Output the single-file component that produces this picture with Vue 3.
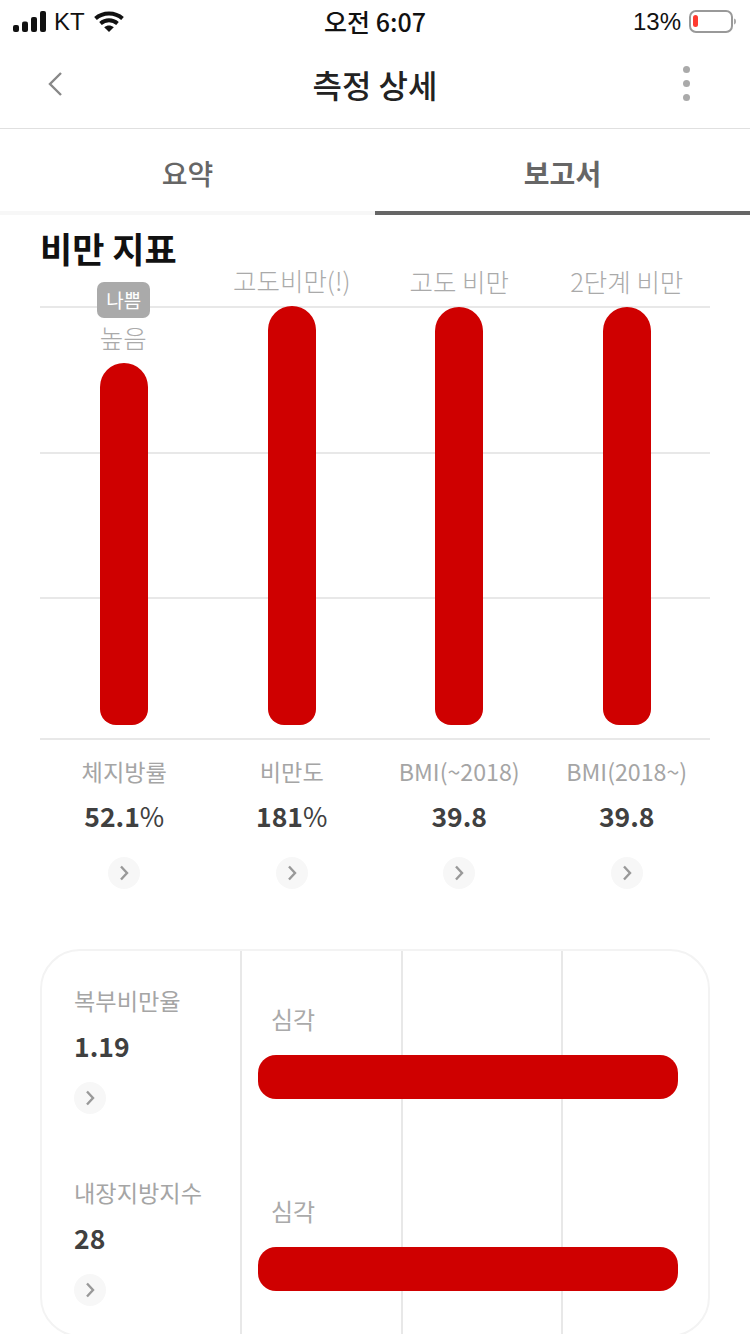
<template>
  <div class="page">
    <!-- status bar -->
    <div class="status-bar">
      <div class="status-left">
        <svg class="signal" width="34" height="22" viewBox="0 0 34 22">
          <rect x="0" y="14" width="6" height="7" rx="2" fill="#111" />
          <rect x="9" y="10.5" width="6" height="10.5" rx="2" fill="#111" />
          <rect x="18" y="6" width="6" height="15" rx="2" fill="#111" />
          <rect x="27" y="0" width="6" height="21" rx="2" fill="#111" />
        </svg>
        <span class="carrier">KT</span>
        <svg class="wifi" width="30" height="22" viewBox="0 0 30 22">
          <path d="M1.5 7.500C9 .8 21 .8 28.500 7.500" fill="none" stroke="#111" stroke-width="4" />
          <path d="M6.500 12.500c5-4.200 12-4.200 17 0" fill="none" stroke="#111" stroke-width="4" />
          <path d="M10.200 16.200c3-2.400 6.600-2.400 9.600 0L15 21z" fill="#111" />
        </svg>
      </div>
      <div class="status-time">오전 6:07</div>
      <div class="status-right">
        <span class="percent">13%</span>
        <svg width="48" height="24" viewBox="0 0 48 24">
          <rect x="1" y="1" width="42" height="21" rx="6" fill="#fff" stroke="#999" stroke-width="2" />
          <rect x="4" y="5" width="5" height="12" rx="2.500" fill="#ff3b30" />
          <path d="M45 8.500c1.600.4 2 1.600 2 3s-.4 2.600-2 3z" fill="#aaa" />
        </svg>
      </div>
    </div>

    <!-- nav -->
    <div class="nav">
      <svg class="nav-back" width="16" height="26" viewBox="0 0 16 26">
        <path d="M14 2 3 13l11 11" fill="none" stroke="#888" stroke-width="2.400" />
      </svg>
      <div class="nav-title">측정 상세</div>
      <div class="nav-more">
        <i /><i /><i />
      </div>
    </div>

    <!-- tabs -->
    <div class="tabs">
      <div class="tab">요약</div>
      <div class="tab active">보고서</div>
    </div>

    <div class="section-title">비만 지표</div>

    <!-- bar chart -->
    <div class="chart">
      <div class="chart-lines">
        <div class="chart-line" v-for="h in lineGaps" :key="h" :style="{ height: h + 'px' }" />
      </div>
      <div v-for="item in columns" :key="item.name" class="chart-col">
        <span v-if="item.badge" class="badge">{{ item.badge }}</span>
        <span class="col-level" :class="{ 'with-badge': item.badge }">{{ item.level }}</span>
        <div class="col-bar" :style="{ height: item.height + 'px' }" />
      </div>
    </div>

    <div class="metrics">
      <div v-for="item in columns" :key="item.name" class="metric">
        <div class="metric-name">{{ item.name }}</div>
        <div class="metric-value">{{ item.value }}<span class="unit">{{ item.unit }}</span></div>
        <div class="more-btn">
          <svg width="10" height="16" viewBox="0 0 10 16"><path d="M2 1.500 8 8l-6 6.500" fill="none" stroke="#999" stroke-width="2.400" /></svg>
        </div>
      </div>
    </div>

    <!-- card -->
    <div class="card">
      <div class="card-left">
        <div v-for="row in rows" :key="row.name" class="card-info">
          <div class="metric-name">{{ row.name }}</div>
          <div class="metric-value">{{ row.value }}</div>
          <div class="more-btn">
            <svg width="10" height="16" viewBox="0 0 10 16"><path d="M2 1.500 8 8l-6 6.500" fill="none" stroke="#999" stroke-width="2.400" /></svg>
          </div>
        </div>
      </div>
      <div class="card-right">
        <div class="card-lines"><i /><i /></div>
        <div v-for="row in rows" :key="row.name" class="card-row">
          <div class="row-level">{{ row.level }}</div>
          <div class="row-bar" />
        </div>
      </div>
    </div>
  </div>
</template>

<script setup>
const lineGaps = [146, 145, 143]

const columns = [
  { name: '체지방률', value: '52.1', unit: '%', level: '높음', badge: '나쁨', height: 362 },
  { name: '비만도', value: '181', unit: '%', level: '고도비만(!)', height: 419 },
  { name: 'BMI(~2018)', value: '39.8', unit: '', level: '고도 비만', height: 418 },
  { name: 'BMI(2018~)', value: '39.8', unit: '', level: '2단계 비만', height: 418 }
]

const rows = [
  { name: '복부비만율', value: '1.19', level: '심각' },
  { name: '내장지방지수', value: '28', level: '심각' }
]
</script>

<style>
html, body {
  overflow: hidden;
  background: #fff;
}
</style>

<style scoped>
.page {
  width: 750px;
  height: 1334px;
  overflow: hidden;
  background: #fff;
  font-family: "Noto Sans CJK KR", "Noto Sans", sans-serif;
}

.status-bar {
  height: 44px;
  display: grid;
  grid-template-columns: 1fr auto 1fr;
  align-items: center;
  color: #111;
}

.status-left {
  display: flex;
  align-items: center;
  padding-left: 13px;
}

.carrier {
  font-family: "Liberation Sans", sans-serif;
  font-size: 24px;
  margin-left: 7px;
  margin-right: 9px;
  line-height: 40px;
}

.status-time {
  font-size: 25px;
  font-weight: 500;
  line-height: 40px;
  margin-top: -3px;
}

.status-right {
  display: flex;
  align-items: center;
  justify-content: flex-end;
  padding-right: 13px;
}

.percent {
  font-family: "Liberation Sans", sans-serif;
  font-size: 24px;
  margin-right: 8px;
  line-height: 40px;
}

.nav {
  height: 84px;
  border-bottom: 1px solid #e0e0e0;
  position: relative;
  display: flex;
  align-items: center;
  justify-content: center;
}

.nav-back {
  position: absolute;
  left: 47px;
  top: 27px;
}

.nav-title {
  font-size: 32px;
  font-weight: 500;
  color: #222;
  line-height: 46px;
  margin-top: -4px;
}

.nav-more {
  position: absolute;
  left: 682.500px;
  top: 22px;
  display: flex;
  flex-direction: column;
  gap: 7px;
}

.nav-more i {
  width: 7px;
  height: 7px;
  border-radius: 50%;
  background: #aaa;
}

.tabs {
  display: flex;
  height: 86px;
}

.tab {
  flex: 1;
  text-align: center;
  font-size: 28px;
  font-weight: 500;
  color: #666;
  line-height: 88px;
  border-bottom: 4px solid #f7f7f7;
}

.tab.active {
  font-weight: 700;
  border-bottom-color: #666;
}

.section-title {
  height: 55px;
  padding-left: 40px;
  font-size: 35px;
  font-weight: 700;
  color: #111;
  line-height: 66px;
}

.chart {
  margin: 0 39.5px 0 40.5px;
  height: 469px;
  position: relative;
  display: flex;
  align-items: flex-end;
  padding-bottom: 14px;
  box-sizing: border-box;
}

.chart-lines {
  position: absolute;
  left: -0.5px;
  right: 0.5px;
  top: 36px;
}

.chart-line {
  border-top: 2px solid #e8e8e8;
  box-sizing: border-box;
}

.chart-line:last-child {
  border-bottom: 2px solid #e8e8e8;
}

.chart-col {
  flex: 1;
  display: flex;
  flex-direction: column;
  align-items: center;
  position: relative;
}

.badge {
  width: 53px;
  height: 36px;
  margin-right: 1px;
  border-radius: 7px;
  background: #aaa;
  color: #fff;
  font-size: 19px;
  line-height: 36px;
  text-align: center;
}

.col-level {
  font-size: 25.5px;
  font-weight: 300;
  color: #aaa;
  line-height: 36px;
  margin-bottom: 8px;
}

.col-level.with-badge {
  line-height: 34px;
  margin-top: 2px;
  margin-right: 2px;
  margin-bottom: 9px;
}

.col-bar {
  width: 48px;
  background: #cf0000;
  border-radius: 24px 24px 16px 16px;
}

.metrics {
  margin: 0 39.5px 0 40.5px;
  display: flex;
}

.metric {
  flex: 1;
  display: flex;
  flex-direction: column;
  align-items: center;
}

.metric-name {
  font-size: 23.2px;
  color: #a5a5a5;
  line-height: 34px;
}

.metrics .metric-name {
  margin-top: 15px;
}

.metric-value {
  font-size: 26.5px;
  font-weight: 700;
  color: #404040;
  line-height: 40px;
  margin-top: 8px;
}

.unit {
  font-weight: 400;
}

.more-btn {
  width: 32px;
  height: 32px;
  border-radius: 50%;
  background: #f7f7f7;
  display: flex;
  align-items: center;
  justify-content: center;
  margin-top: 21px;
}

.card {
  margin: 60px 40px 0;
  height: 388px;
  box-sizing: border-box;
  border: 2px solid #f3f3f3;
  border-radius: 40px;
  display: flex;
  overflow: hidden;
}

.card-left {
  width: 198px;
  padding: 32px 0 0 32px;
  box-sizing: border-box;
}

.card-info {
  height: 192px;
}

.card-info .metric-value {
  margin-top: 9px;
  line-height: 40px;
}

.card-info .more-btn {
  margin-top: 16px;
}

.card-right {
  flex: 1;
  position: relative;
  padding: 51px 30px 0 16px;
  border-left: 2px solid #e8e8e8;
}

.card-lines {
  position: absolute;
  inset: 0;
  display: flex;
  padding-left: 159px;
}

.card-lines i {
  flex: none;
  width: 160px;
  border-left: 2px solid #e8e8e8;
  box-sizing: border-box;
}

.card-row {
  position: relative;
  height: 192px;
}

.row-level {
  font-size: 24px;
  color: #aaa;
  line-height: 34px;
  padding-left: 13px;
}

.row-bar {
  height: 43.5px;
  margin-top: 19px;
  border-radius: 18px;
  background: #cf0000;
}
</style>
